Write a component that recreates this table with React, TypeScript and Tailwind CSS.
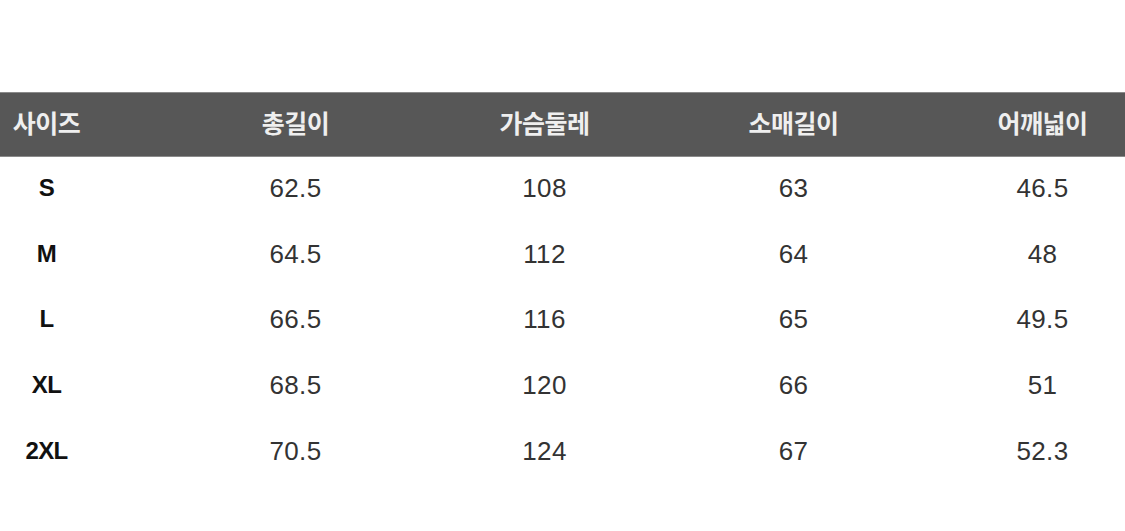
import React from "react";

const headers = ["사이즈", "총길이", "가슴둘레", "소매길이", "어깨넓이"];
const rows = [
  ["S", "62.5", "108", "63", "46.5"],
  ["M", "64.5", "112", "64", "48"],
  ["L", "66.5", "116", "65", "49.5"],
  ["XL", "68.5", "120", "66", "51"],
  ["2XL", "70.5", "124", "67", "52.3"],
];

export default function App() {
  return (
    <div className="w-[1125px] h-[531px] bg-white overflow-hidden font-['Liberation_Sans','Noto_Sans_CJK_KR',sans-serif]">
      <div className="pt-[92px] -ml-[78px] w-[1245px]">
        <div className="grid grid-cols-[repeat(5,249px)] h-[65px] bg-[#575757] border-y border-[#8a8a8a] items-center text-[25px] font-bold text-[#efefef] tracking-[-0.5px]">
          {headers.map((h) => (
            <div key={h} className="text-center leading-none">{h}</div>
          ))}
        </div>
        {rows.map((r) => (
          <div key={r[0]} className="grid grid-cols-[repeat(5,249px)] h-[65.6px] items-center text-[26px] text-[#333]">
            {r.map((c, i) => (
              <div
                key={i}
                className={
                  i === 0
                    ? "text-center leading-none pb-[3px] font-bold text-[24px] text-[#111] tracking-[-0.6px]"
                    : "text-center leading-none pb-[3px] tracking-[0.4px]"
                }
              >
                {c}
              </div>
            ))}
          </div>
        ))}
      </div>
    </div>
  );
}
